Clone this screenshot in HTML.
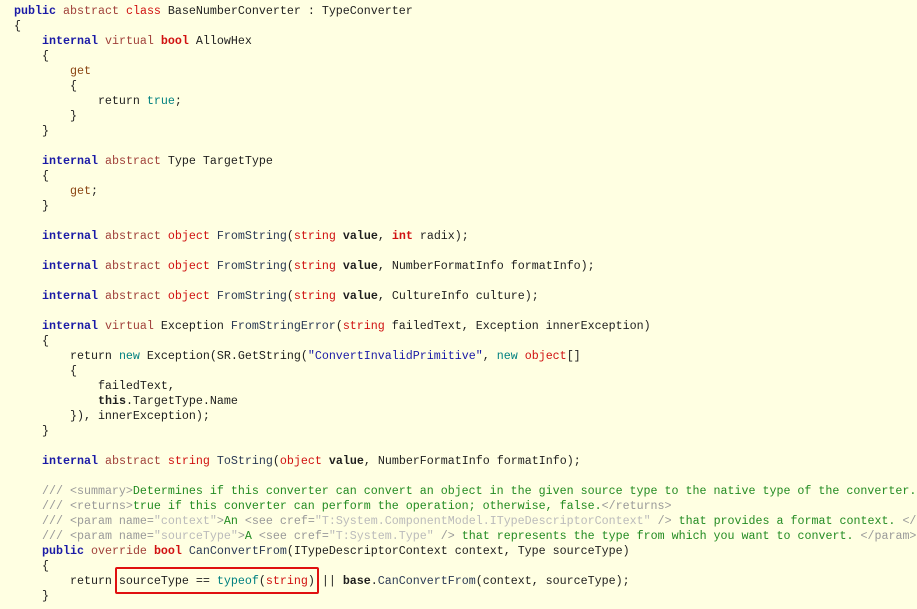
<!DOCTYPE html>
<html><head><meta charset="utf-8"><style>
html,body{margin:0;padding:0;background:#ffffe2;width:917px;height:609px;overflow:hidden}
pre{margin:0;position:absolute;left:14px;top:4px;font-family:"Liberation Mono",monospace;font-size:11.67px;line-height:15px;color:#1e1e1e;white-space:pre}
.k{color:#1a1aa6;font-weight:bold}
.a{color:#a0403a}
.r{color:#d01010}
.rb{color:#d01010;font-weight:bold}
.g{color:#8b4513}
.t{color:#008080}
.m{color:#2b3a55}
.b{font-weight:bold}
.s{color:#1a1aa6}
.c{color:#999}
.cg{color:#228b22}
.cs{color:#bbb}
.box{position:absolute;left:115px;top:567px;width:200px;height:23px;border:2px solid #e01010;border-radius:2px}
</style></head><body>
<pre><span class="k">public</span> <span class="a">abstract</span> <span class="r">class</span> BaseNumberConverter : TypeConverter
{
    <span class="k">internal</span> <span class="a">virtual</span> <span class="rb">bool</span> AllowHex
    {
        <span class="g">get</span>
        {
            return <span class="t">true</span>;
        }
    }

    <span class="k">internal</span> <span class="a">abstract</span> Type TargetType
    {
        <span class="g">get</span>;
    }

    <span class="k">internal</span> <span class="a">abstract</span> <span class="r">object</span> <span class="m">FromString</span>(<span class="r">string</span> <span class="b">value</span>, <span class="rb">int</span> radix);

    <span class="k">internal</span> <span class="a">abstract</span> <span class="r">object</span> <span class="m">FromString</span>(<span class="r">string</span> <span class="b">value</span>, NumberFormatInfo formatInfo);

    <span class="k">internal</span> <span class="a">abstract</span> <span class="r">object</span> <span class="m">FromString</span>(<span class="r">string</span> <span class="b">value</span>, CultureInfo culture);

    <span class="k">internal</span> <span class="a">virtual</span> Exception <span class="m">FromStringError</span>(<span class="r">string</span> failedText, Exception innerException)
    {
        return <span class="t">new</span> Exception(SR.GetString(<span class="s">"ConvertInvalidPrimitive"</span>, <span class="t">new</span> <span class="r">object</span>[]
        {
            failedText,
            <span class="b">this</span>.TargetType.Name
        }), innerException);
    }

    <span class="k">internal</span> <span class="a">abstract</span> <span class="r">string</span> <span class="m">ToString</span>(<span class="r">object</span> <span class="b">value</span>, NumberFormatInfo formatInfo);

    <span class="c">/// &lt;summary&gt;</span><span class="cg">Determines if this converter can convert an object in the given source type to the native type of the converter.</span>
    <span class="c">/// &lt;returns&gt;</span><span class="cg">true if this converter can perform the operation; otherwise, false.</span><span class="c">&lt;/returns&gt;</span>
    <span class="c">/// &lt;param name=</span><span class="cs">"context"</span><span class="c">&gt;</span><span class="cg">An </span><span class="c">&lt;see cref=</span><span class="cs">"T:System.ComponentModel.ITypeDescriptorContext"</span><span class="c"> /&gt;</span><span class="cg"> that provides a format context. </span><span class="c">&lt;/param&gt;</span>
    <span class="c">/// &lt;param name=</span><span class="cs">"sourceType"</span><span class="c">&gt;</span><span class="cg">A </span><span class="c">&lt;see cref=</span><span class="cs">"T:System.Type"</span><span class="c"> /&gt;</span><span class="cg"> that represents the type from which you want to convert. </span><span class="c">&lt;/param&gt;</span>
    <span class="k">public</span> <span class="a">override</span> <span class="rb">bool</span> <span class="m">CanConvertFrom</span>(ITypeDescriptorContext context, Type sourceType)
    {
        return sourceType == <span class="t">typeof</span>(<span class="r">string</span>) || <span class="b">base</span>.<span class="m">CanConvertFrom</span>(context, sourceType);
    }</pre>
<div class="box"></div>
</body></html>
